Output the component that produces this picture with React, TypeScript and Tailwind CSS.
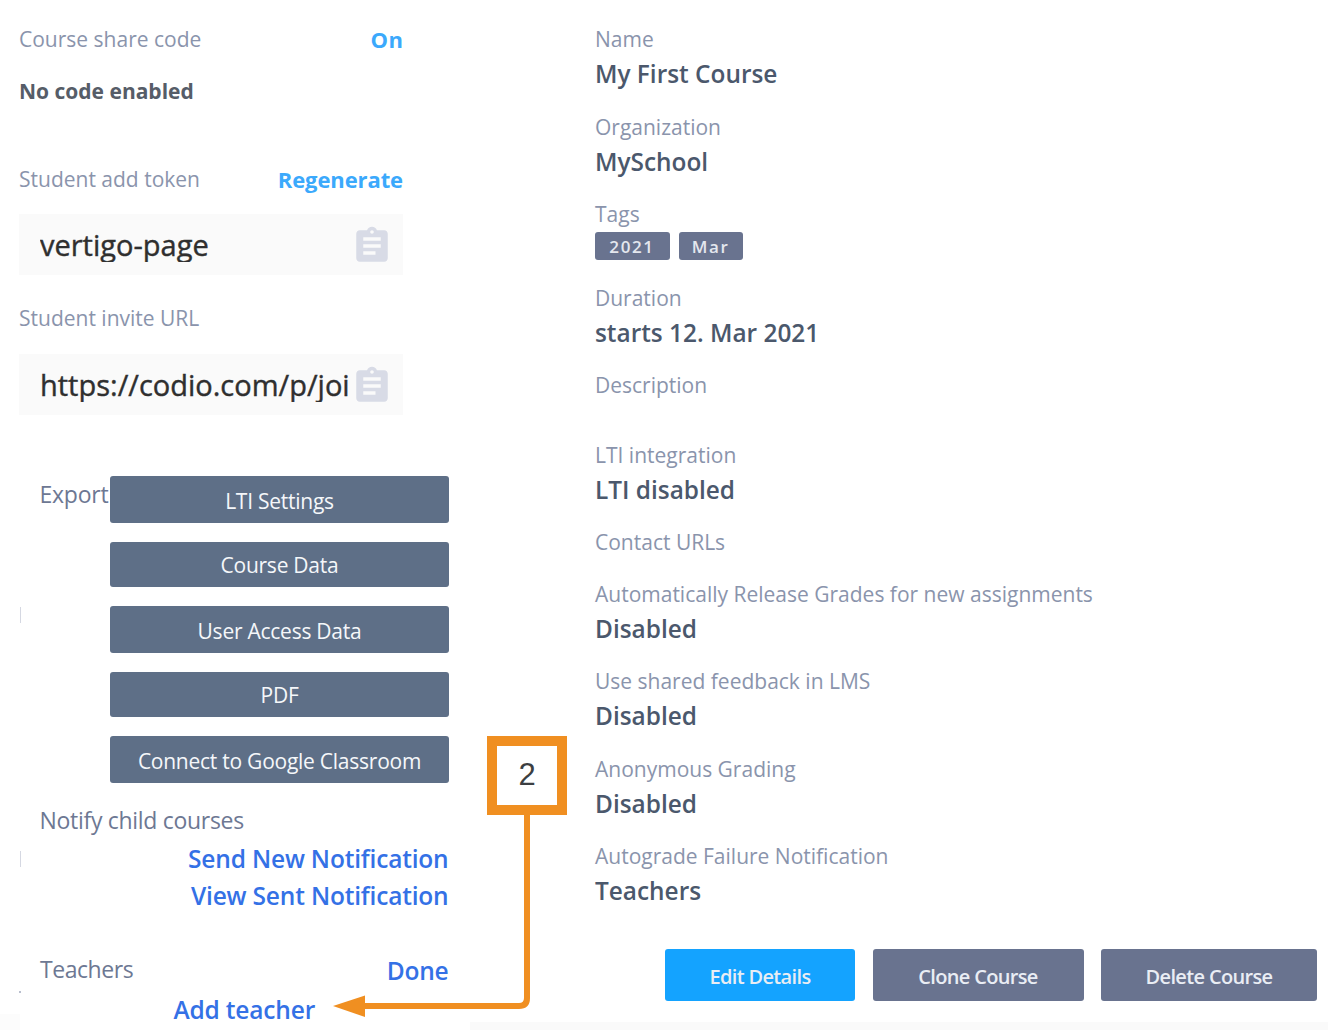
import React from "react";
import { MdAssignment } from "react-icons/md";

const exportActions = [
  { label: "LTI Settings", box: "h-[47px] pt-[3px]" },
  { label: "Course Data", box: "mt-[19px] h-[45px] pt-px" },
  { label: "User Access Data", box: "mt-[19px] h-[47px] pt-[3px]" },
  { label: "PDF", box: "mt-[19px] h-[45px] pt-px" },
  { label: "Connect to Google Classroom", box: "mt-[19px] h-[47px] pt-[3px]" },
];

type FieldProps = { label: string; value?: string; size: string; children?: React.ReactNode };

function Field({ label, value, size, children }: FieldProps) {
  return (
    <div className={`shrink-0 ${size}`}>
      <dt className="h-[35px] text-[21px] leading-[30px] text-[#8a94ac]">{label}</dt>
      {value && (
        <dd className="text-[24.4px] font-semibold leading-[30px] text-[#4b586c]">{value}</dd>
      )}
      {children}
    </div>
  );
}

function Tag({ text, size }: { text: string; size: string }) {
  return (
    <span
      className={`flex h-7 items-center justify-center rounded-[3px] bg-[#69738f] pr-px text-[17px] font-semibold leading-none tracking-[1.6px] text-[#e4e7ee] ${size}`}
    >
      {text}
    </span>
  );
}

function CopyField({ value }: { value: string }) {
  return (
    <div className="flex h-[61px] w-[384px] items-center bg-[#fafafa] pl-[21px]">
      <div className="h-[34px] w-[309px] overflow-hidden whitespace-nowrap text-[29px] leading-[34px] text-[#2f2f2f] [-webkit-text-stroke:0.4px_#2f2f2f]">
        {value}
      </div>
      <MdAssignment className="mt-0.5 ml-0.5 size-[42px] shrink-0 text-[#d8dbe6]" />
    </div>
  );
}

function Label({ children }: { children: React.ReactNode }) {
  return <span className="text-[21px] leading-[30px] text-[#8a94ac]">{children}</span>;
}

function Link({ children }: { children: React.ReactNode }) {
  return (
    <a className="text-[24.5px] font-semibold leading-[30px] tracking-[-0.18px] text-[#3471e6]">{children}</a>
  );
}

function ActionButton({ text, look }: { text: string; look: string }) {
  return (
    <button
      className={`flex h-[52px] items-center justify-center rounded-[3px] pt-1 text-[20px] font-semibold leading-none tracking-[-0.66px] text-[#e9edf4] ${look}`}
    >
      {text}
    </button>
  );
}

export default function App() {
  return (
    <div className="relative flex h-[1030px] w-[1328px] overflow-hidden whitespace-nowrap bg-white font-['Open_Sans',sans-serif]">
      <div className="flex w-5 shrink-0 flex-col">
        <div className="mt-auto h-4 bg-[#fcfcfc]" />
      </div>

      <div className="-ml-px flex w-[451px] shrink-0 flex-col">
        <div className="mt-6 flex h-[52px] w-[384.5px] justify-between">
          <Label>Course share code</Label>
          <a className="text-[22px] font-bold leading-[30px] tracking-[0.5px] text-[#3ba9fc]">On</a>
        </div>
        <div className="h-[88px] text-[21px] font-bold leading-[30px] text-[#565d68]">No code enabled</div>
        <div className="flex h-[50px] w-[384px] justify-between">
          <Label>Student add token</Label>
          <a className="text-[22px] font-bold leading-[30px] tracking-[-0.1px] text-[#3ba9fc]">Regenerate</a>
        </div>
        <CopyField value="vertigo-page" />
        <div className="mt-7 h-[51px]">
          <Label>Student invite URL</Label>
        </div>
        <CopyField value="https://codio.com/p/joi" />

        <div className="mt-[61px] flex">
          <div className="w-[91px] pt-[3px] pl-[20.5px] text-[23px] leading-[30px] tracking-[-0.25px] text-[#6d7893]">Export</div>
          <div className="w-[339px]">
            {exportActions.map((action) => (
              <button
                key={action.label}
                className={`flex w-full items-center justify-center rounded-[3px] bg-[#5e6f87] text-[21px] leading-none tracking-[-0.25px] text-[#f5f7fa] ${action.box}`}
              >
                {action.label}
              </button>
            ))}
          </div>
        </div>

        <div className="mt-[22px] pl-[20.5px] text-[23px] leading-[30px] tracking-[-0.3px] text-[#6d7893]">
          Notify child courses
        </div>
        <div className="mt-[9px] flex w-[429.5px] flex-col items-end gap-[7px]">
          <Link>Send New Notification</Link>
          <Link>View Sent Notification</Link>
        </div>
        <div className="mt-[43px] flex w-[429.5px] justify-between pl-[21px]">
          <span className="text-[23px] leading-[30px] tracking-[-0.45px] text-[#6d7893]">Teachers</span>
          <span className="flex pt-0.5">
            <Link>Done</Link>
          </span>
        </div>
        <div className="mt-[9px] flex pl-[154.5px]">
          <Link>Add teacher</Link>
        </div>
      </div>

      <div className="flex grow flex-col">
        <dl className="ml-[125px] flex flex-col pt-6">
          <Field label="Name" value="My First Course" size="h-[88px]" />
          <Field label="Organization" value="MySchool" size="h-[87px]" />
          <Field label="Tags" size="h-[84px]">
            <dd className="-mt-0.5 flex gap-[9px]">
              <Tag text="2021" size="w-[75px]" />
              <Tag text="Mar" size="w-16" />
            </dd>
          </Field>
          <Field label="Duration" value="starts 12. Mar 2021" size="h-[87px]" />
          <Field label="Description" size="h-[70px]" />
          <Field label="LTI integration" value="LTI disabled" size="h-[87px]" />
          <Field label="Contact URLs" size="h-[52px]" />
          <Field label="Automatically Release Grades for new assignments" value="Disabled" size="h-[87px]" />
          <Field label="Use shared feedback in LMS" value="Disabled" size="h-[88px]" />
          <Field label="Anonymous Grading" value="Disabled" size="h-[87px]" />
          <Field label="Autograde Failure Notification" value="Teachers" size="h-[87px]" />
        </dl>
        <div className="mt-[21px] ml-[195px] flex">
          <ActionButton text="Edit Details" look="w-[190px] bg-[#14a3ff]" />
          <ActionButton text="Clone Course" look="ml-[17.5px] w-[211px] bg-[#69738f]" />
          <ActionButton text="Delete Course" look="ml-[17.5px] w-[216px] bg-[#69738f]" />
        </div>
        <div className="mt-auto h-2 bg-[#fafafa]" />
      </div>

      <i className="absolute top-[607px] left-5 h-4 w-px bg-[#d5d8e2]" />
      <i className="absolute top-[851px] left-5 h-4 w-px bg-[#d5d8e2]" />
      <i className="absolute top-[991px] left-[19px] h-0.5 w-0.5 bg-[#b9bfce]" />

      <svg className="absolute top-[810px] left-[330px]" width="204" height="212" viewBox="330 810 204 212" fill="none">
        <path d="M527 812V998Q527 1006 519 1006H362" stroke="#f08f21" strokeWidth="6" />
        <path d="M333 1006L365 995.5V1017Z" fill="#f08f21" />
      </svg>
      <div className="absolute top-[736px] left-[487px] flex h-[79px] w-20 items-center justify-center border-10 border-[#f08f21] bg-white pb-0.5 font-['Liberation_Sans',Arial,sans-serif] text-[31px] leading-none text-[#3c3f42]">
        2
      </div>
    </div>
  );
}
